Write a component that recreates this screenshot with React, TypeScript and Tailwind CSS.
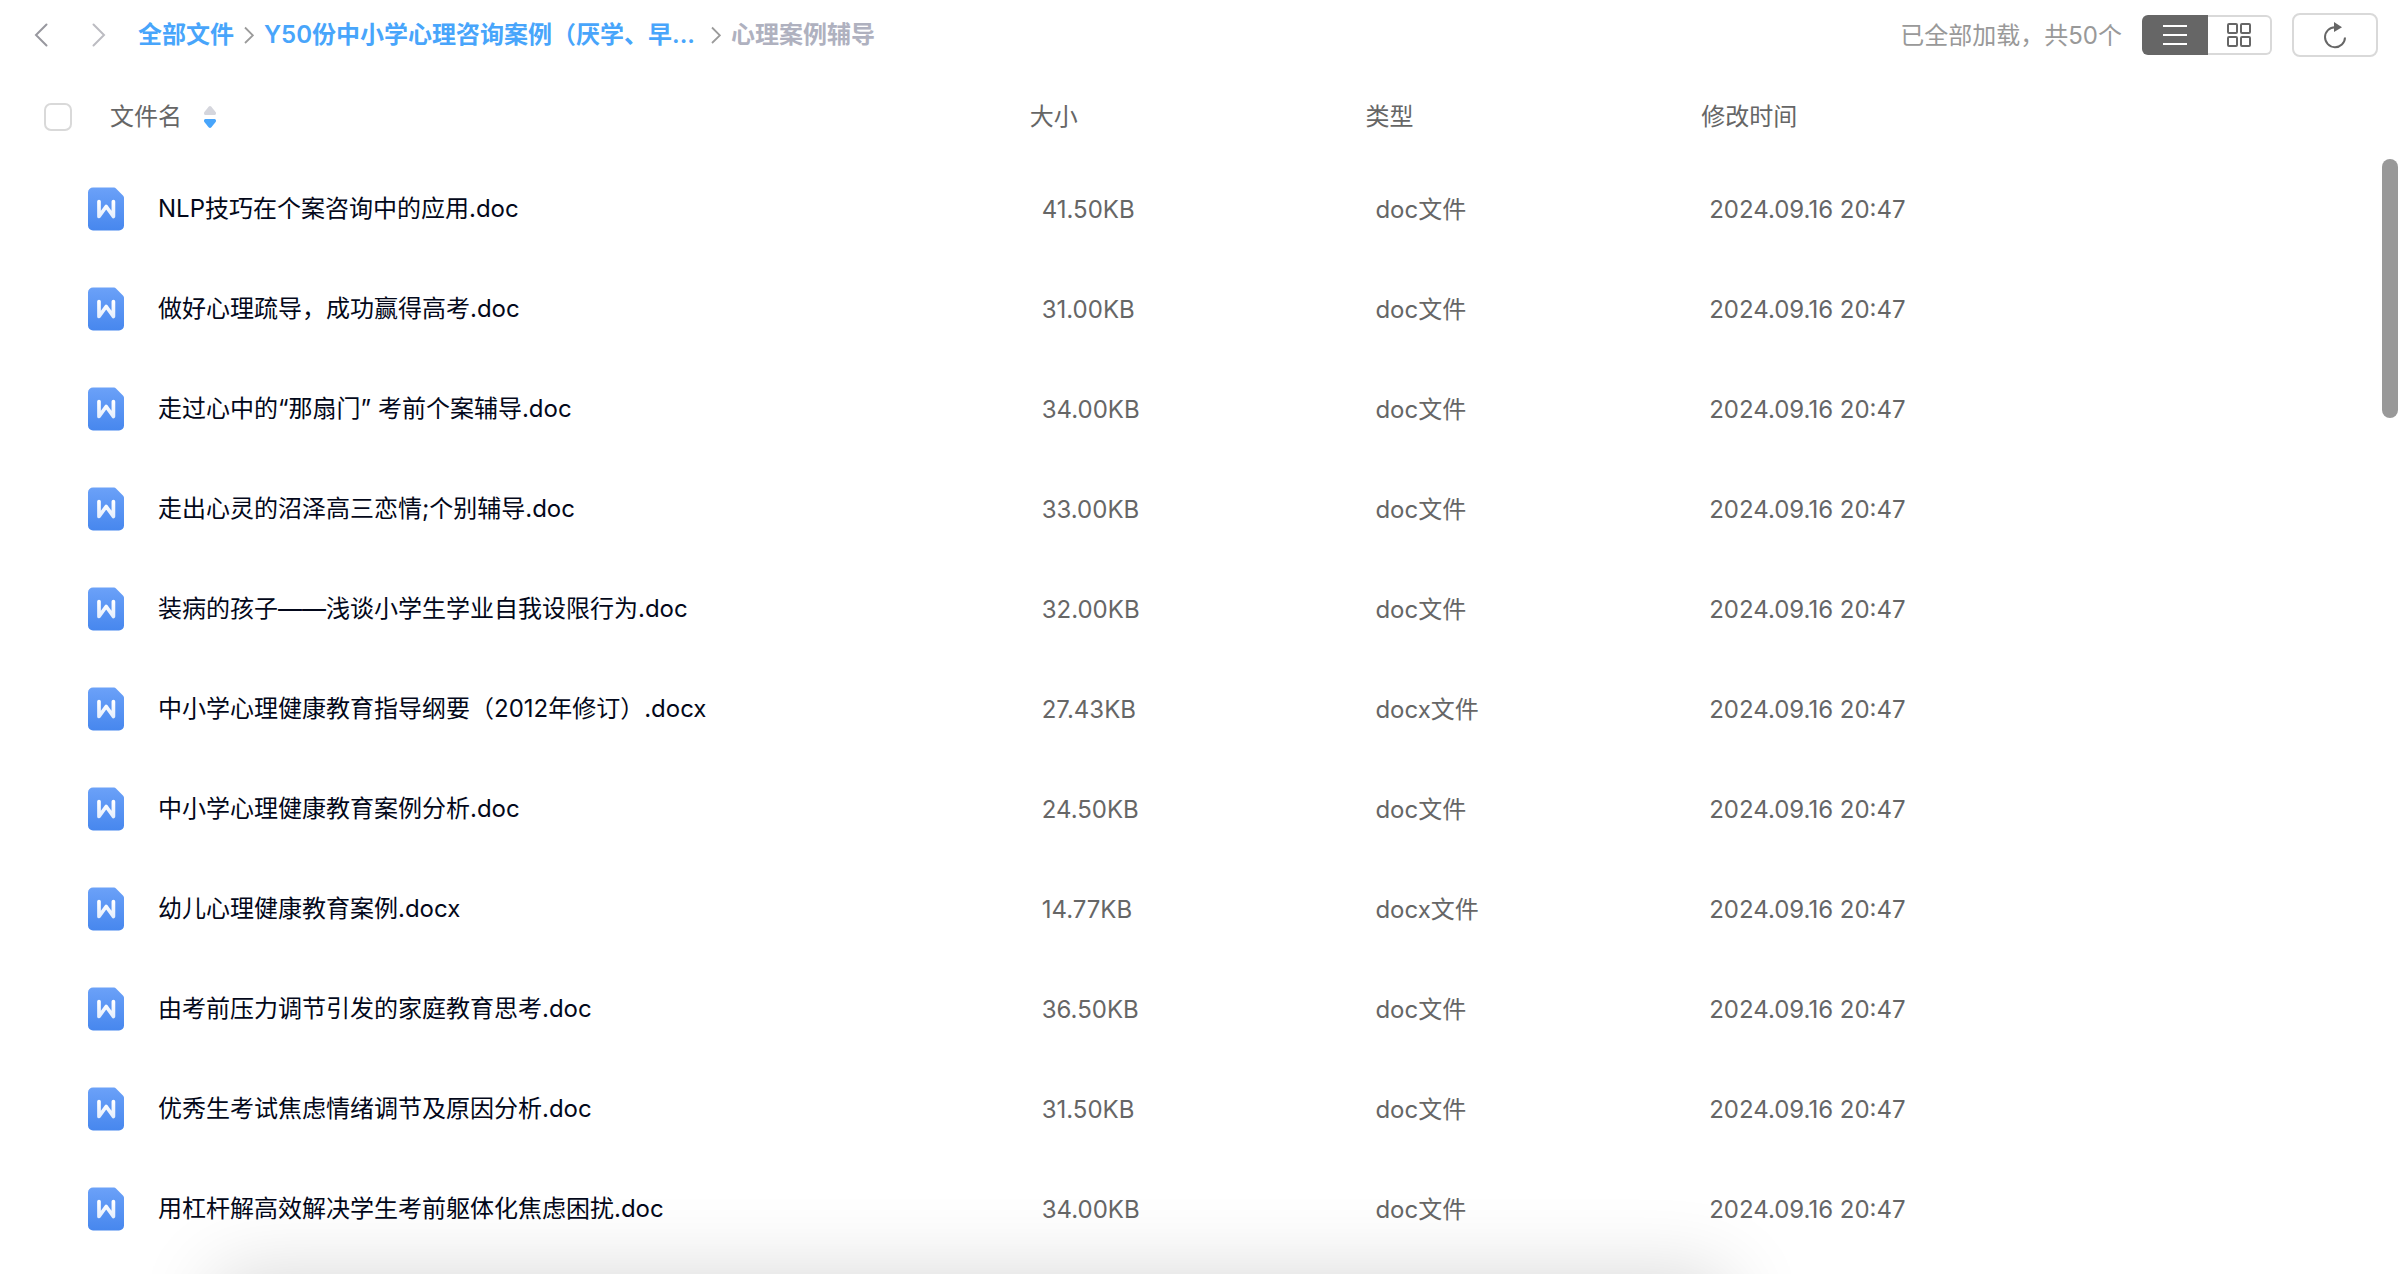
const files = [
  { name: "NLP技巧在个案咨询中的应用.doc", size: "41.50KB", type: "doc文件" },
  { name: "做好心理疏导，成功赢得高考.doc", size: "31.00KB", type: "doc文件" },
  { name: "走过心中的“那扇门” 考前个案辅导.doc", size: "34.00KB", type: "doc文件" },
  { name: "走出心灵的沼泽高三恋情;个别辅导.doc", size: "33.00KB", type: "doc文件" },
  { name: "装病的孩子——浅谈小学生学业自我设限行为.doc", size: "32.00KB", type: "doc文件" },
  { name: "中小学心理健康教育指导纲要（2012年修订）.docx", size: "27.43KB", type: "docx文件" },
  { name: "中小学心理健康教育案例分析.doc", size: "24.50KB", type: "doc文件" },
  { name: "幼儿心理健康教育案例.docx", size: "14.77KB", type: "docx文件" },
  { name: "由考前压力调节引发的家庭教育思考.doc", size: "36.50KB", type: "doc文件" },
  { name: "优秀生考试焦虑情绪调节及原因分析.doc", size: "31.50KB", type: "doc文件" },
  { name: "用杠杆解高效解决学生考前躯体化焦虑困扰.doc", size: "34.00KB", type: "doc文件" },
];

const modifiedAt = "2024.09.16 20:47";

const WordIcon: React.FC = () => (
  <svg width="36" height="44" viewBox="0 0 36 44" className="shrink-0" aria-hidden="true">
    <defs>
      <linearGradient id="word-bg" x1="0" y1="0" x2="0" y2="1">
        <stop offset="0" stopColor="#6ba1f8" />
        <stop offset="1" stopColor="#4787ee" />
      </linearGradient>
      <linearGradient id="word-mark" x1="0" y1="0" x2="0" y2="1">
        <stop offset="0" stopColor="#ffffff" />
        <stop offset="1" stopColor="#e6effd" />
      </linearGradient>
    </defs>
    <path
      d="M5 .5h21a3 3 0 0 1 2 .9l7.200 7.400a3 3 0 0 1 .8 2V38.500a5 5 0 0 1-5 5H5a5 5 0 0 1-5-5V5.500a5 5 0 0 1 5-5Z"
      fill="url(#word-bg)"
    />
    <path
      d="M11 14.500V29.500L18.200 19.500L25.400 29.500V14.500"
      fill="none"
      stroke="url(#word-mark)"
      strokeWidth="3.700"
      strokeLinecap="round"
      strokeLinejoin="round"
    />
  </svg>
);

const SortIcon: React.FC = () => (
  <svg width="12" height="22" viewBox="0 0 12 22" aria-hidden="true">
    <path d="M4.600.8a2 2 0 0 1 2.800 0L11.600 6c.8 1 .4 3-1 3H1.400C0 9-.4 7 .4 6Z" fill="#d5d6dd" />
    <path d="M4.600 21.200a2 2 0 0 0 2.800 0L11.600 16c.8-1 .4-3-1-3H1.400C0 13-.4 15 .4 16Z" fill="#48a5fb" />
  </svg>
);

const Separator: React.FC = () => (
  <svg width="10" height="18" viewBox="0 0 10 18" className="shrink-0" aria-hidden="true">
    <path d="M1 1.500L8.800 9.300L1 17" fill="none" stroke="#9b9b9b" strokeWidth="1.800" />
  </svg>
);

const Toolbar: React.FC = () => (
  <header className="flex h-[70px] items-center justify-between pr-5 pl-[34px]">
    <div className="flex items-center">
      <button type="button" aria-label="后退" className="mr-11">
        <svg width="14" height="24" viewBox="0 0 14 24" fill="none" stroke="#98989f" strokeWidth="2">
          <path d="M12.500 1.500L2 12L12.500 22.500" strokeLinecap="round" />
        </svg>
      </button>
      <button type="button" aria-label="前进" className="mr-8">
        <svg width="14" height="24" viewBox="0 0 14 24" fill="none" stroke="#bcbcc2" strokeWidth="2">
          <path d="M1.500 1.500L12 12L1.500 22.500" strokeLinecap="round" />
        </svg>
      </button>
      <nav className="flex items-center gap-[10px] font-semibold whitespace-nowrap">
        <a href="#all" className="text-[#48a5fb]">全部文件</a>
        <Separator />
        <a href="#cases" className="mr-1.5 text-[#48a5fb]">Y50份中小学心理咨询案例（厌学、早...</a>
        <Separator />
        <span className="text-[#afb1bf]">心理案例辅导</span>
      </nav>
    </div>
    <div className="flex items-center gap-5 whitespace-nowrap">
      <span className="pt-0.5 text-[#999]">已全部加载，共50个</span>
      <div className="flex h-10 w-[130px]">
        <button
          type="button"
          aria-label="列表视图"
          className="flex w-[66px] items-center justify-center rounded-l-md bg-[#666]"
        >
          <svg width="24" height="20" viewBox="0 0 24 20" stroke="#fff" strokeWidth="2">
            <path d="M0 1h24M0 10h24M0 19h24" />
          </svg>
        </button>
        <button
          type="button"
          aria-label="网格视图"
          className="flex flex-1 items-center justify-center rounded-r-md border-2 border-l-0 border-[#d9d9d9]"
        >
          <svg width="24" height="24" viewBox="0 0 24 24" fill="none" stroke="#666" strokeWidth="2">
            <rect x="1" y="1" width="9" height="9" rx="1" />
            <rect x="14" y="1" width="9" height="9" rx="1" />
            <rect x="1" y="14" width="9" height="9" rx="1" />
            <rect x="14" y="14" width="9" height="9" rx="1" />
          </svg>
        </button>
      </div>
      <button
        type="button"
        aria-label="刷新"
        className="flex h-11 w-[86px] items-center justify-center rounded-lg border-2 border-[#d9d9d9]"
      >
        <svg width="24" height="28" viewBox="0 0 24 28" fill="none">
          <path d="M13 6.200H12A10 10 0 1 0 22 16.500" stroke="#666" strokeWidth="2" />
          <path d="M11 1L19 6.200L11 11Z" fill="#666" />
        </svg>
      </button>
    </div>
  </header>
);

const FileTable: React.FC = () => (
  <table className="w-full table-fixed text-left text-[#666]">
    <colgroup>
      <col className="w-3/7" />
      <col className="w-[14%]" />
      <col className="w-[14%]" />
      <col />
    </colgroup>
    <thead>
      <tr className="h-[89px]">
        <th className="pt-1 pl-11 font-normal">
          <div className="flex items-center">
            <input
              type="checkbox"
              aria-label="全选"
              className="mr-[38px] size-7 appearance-none rounded-[7px] border-2 border-[#d9d9d9] bg-white"
            />
            <button type="button" className="flex items-center gap-[22px]">
              文件名
              <SortIcon />
            </button>
          </div>
        </th>
        <th className="pt-1 pl-0.5 font-normal">大小</th>
        <th className="pt-1 pl-0.5 font-normal">类型</th>
        <th className="pt-1 pl-0.5 font-normal">修改时间</th>
      </tr>
    </thead>
    <tbody>
      {files.map((file) => (
        <tr key={file.name} className="h-[100px]">
          <td className="pl-[88px]">
            <div className="flex items-center gap-[34px] whitespace-nowrap text-[#03081a]">
              <WordIcon />
              {file.name}
            </div>
          </td>
          <td className="pt-0.5 pl-3.5">{file.size}</td>
          <td className="pt-0.5 pl-3">{file.type}</td>
          <td className="pt-0.5 pl-2.5">{modifiedAt}</td>
        </tr>
      ))}
    </tbody>
  </table>
);

export default function App() {
  return (
    <div className="relative min-h-screen overflow-hidden bg-white font-[Inter,'Noto_Sans_CJK_SC',sans-serif] text-[24px] leading-9">
      <Toolbar />
      <FileTable />
      {/* scrollbar thumb */}
      <div className="absolute top-[159px] right-0 h-[259px] w-4 rounded-full bg-[#999]" />
      {/* shadow cast by the panel below */}
      <div className="absolute top-full right-[28%] left-[9%] h-40 shadow-[0_0_80px_rgba(0,0,0,0.16)]" />
    </div>
  );
}
